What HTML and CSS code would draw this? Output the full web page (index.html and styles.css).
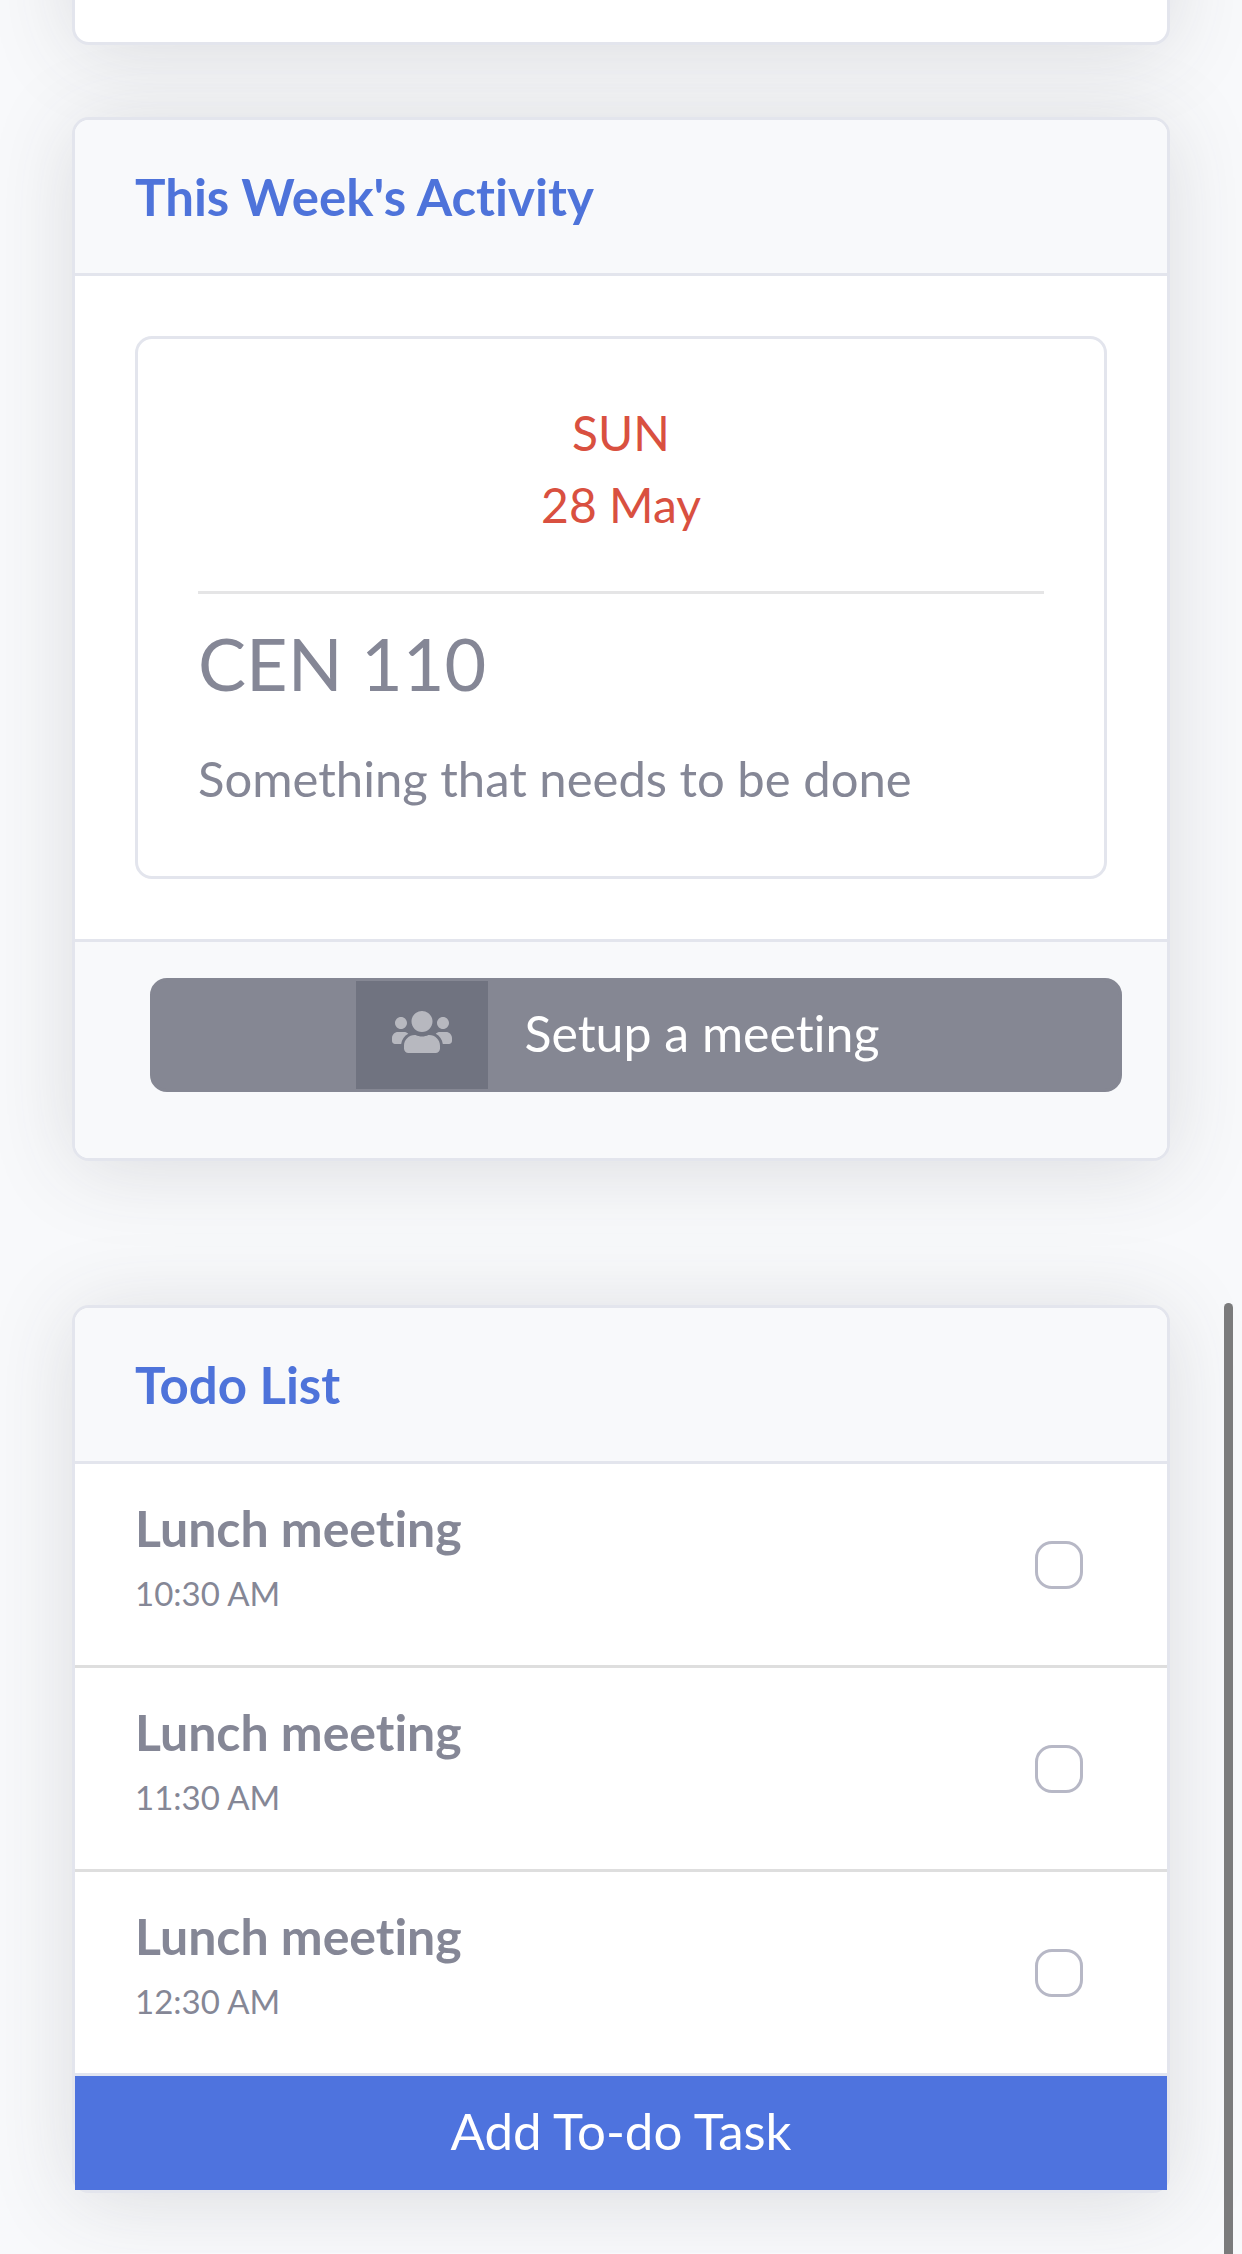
FILE: index.html
```html
<!DOCTYPE html>
<html lang="en">
<head>
<meta charset="utf-8">
<meta name="viewport" content="width=device-width, initial-scale=1">
<title>Dashboard</title>
<link rel="stylesheet" href="styles.css">
</head>
<body>
<main class="page">
  <section class="card card-previous"></section>

  <section class="card">
    <header class="card-header"><h2 class="card-heading">This Week's Activity</h2></header>
    <div class="card-body">
      <article class="event">
        <p class="event-date">SUN<br>28 May</p>
        <hr class="event-rule">
        <h3 class="event-title">CEN 110</h3>
        <p class="event-text">Something that needs to be done</p>
      </article>
    </div>
    <footer class="card-footer">
      <button class="btn btn-meeting" type="button">
        <span class="btn-icon">
          <svg class="icon" viewBox="0 0 640 512" aria-hidden="true"><path fill="currentColor" d="M96 224c35.300 0 64-28.700 64-64s-28.700-64-64-64-64 28.700-64 64 28.700 64 64 64zm448 0c35.300 0 64-28.700 64-64s-28.700-64-64-64-64 28.700-64 64 28.700 64 64 64zm32 32h-64c-17.600 0-33.500 7.100-45.100 18.600 40.300 22.100 68.900 62 75.100 109.400h66c17.700 0 32-14.300 32-32v-32c0-35.300-28.700-64-64-64zm-256 0c61.900 0 112-50.100 112-112S381.900 32 320 32 208 82.100 208 144s50.100 112 112 112zm76.800 32h-8.300c-20.800 10-43.900 16-68.500 16s-47.600-6-68.500-16h-8.300C179.600 288 128 339.600 128 403.200V432c0 26.500 21.500 48 48 48h288c26.500 0 48-21.500 48-48v-28.800c0-63.600-51.600-115.200-115.200-115.200zm-223.700-13.400C161.500 263.100 145.600 256 128 256H64c-35.300 0-64 28.700-64 64v32c0 17.700 14.300 32 32 32h65.900c6.300-47.400 34.900-87.300 75.200-109.400z"/></svg>
        </span>
        <span class="btn-text">Setup a meeting</span>
      </button>
    </footer>
  </section>

  <section class="card card-todo">
    <header class="card-header"><h2 class="card-heading">Todo List</h2></header>
    <ul class="todo-list">
      <li class="todo-item">
        <label class="todo-label" for="todo-1"><strong class="todo-title">Lunch meeting</strong><small class="todo-time">10:30 AM</small></label>
        <input class="todo-check" type="checkbox" id="todo-1">
      </li>
      <li class="todo-item">
        <label class="todo-label" for="todo-2"><strong class="todo-title">Lunch meeting</strong><small class="todo-time">11:30 AM</small></label>
        <input class="todo-check" type="checkbox" id="todo-2">
      </li>
      <li class="todo-item">
        <label class="todo-label" for="todo-3"><strong class="todo-title">Lunch meeting</strong><small class="todo-time">12:30 AM</small></label>
        <input class="todo-check" type="checkbox" id="todo-3">
      </li>
    </ul>
    <button class="btn btn-add" type="button">Add To-do Task</button>
  </section>
</main>
<div class="scroll-thumb"></div>
</body>
</html>
```
FILE: styles.css
```css
* {
  box-sizing: border-box;
}

body {
  margin: 0;
  overflow-x: hidden;
  background: #f8f9fb;
  color: #858796;
  font-family: Lato, "Open Sans", sans-serif;
  font-size: 49px;
  font-variant-ligatures: none;
  line-height: 72px;
}

h2, h3, p, ul {
  margin: 0;
  padding: 0;
}

.page {
  display: flex;
  flex-direction: column;
  gap: 72px;
  padding: 0 72px 60px;
}

.card {
  border: 3px solid #e3e5ed;
  border-radius: 17px;
  background: #fff;
  box-shadow: 0 7px 84px rgba(58, 59, 69, 0.15);
}

/* End of the card that is scrolled out above */
.card-previous {
  min-height: 345px;
  margin-top: -300px;
}

.card-todo {
  margin-top: 72px;
}

.card-header {
  padding: 48px 60px;
  border-bottom: 3px solid #e3e5ed;
  border-radius: 14px 14px 0 0;
  background: #f8f9fb;
}

.card-heading {
  color: #4e73da;
  font-size: 51px;
  font-weight: 700;
  line-height: 57px;
}

.card-body {
  padding: 60px;
}

.card-footer {
  padding: 36px 45px 66px 75px;
  border-top: 3px solid #e3e5ed;
  border-radius: 0 0 14px 14px;
  background: #f8f9fb;
}

.event {
  padding: 58px 60px 62px;
  border: 3px solid #e3e5ed;
  border-radius: 17px;
}

.event-date {
  color: #d95040;
  font-size: 48px;
  text-align: center;
}

.event-rule {
  margin: 50px 0 26px;
  border: 0;
  border-top: 3px solid #e5e5e6;
}

.event-title {
  margin-bottom: 36px;
  font-size: 72px;
  font-weight: 400;
  line-height: 86px;
}

.btn {
  display: flex;
  justify-content: center;
  width: 100%;
  padding: 0;
  border: 3px solid;
  color: #fff;
  font: inherit;
}

.btn-meeting {
  border-color: #858793;
  border-radius: 17px;
  background: #858793;
  font-size: 50px;
}

.btn-icon {
  padding: 27px 36px 33px;
  background: #707380;
  color: #b7b8bf;
}

.icon {
  display: block;
  width: 60px;
  height: 48px;
}

.btn-text {
  padding: 16px 36px 20px;
}

.todo-list {
  list-style: none;
}

.todo-item {
  display: flex;
  align-items: center;
  justify-content: space-between;
  padding: 36px 84px 36px 60px;
  border-bottom: 3px solid #dedede;
}

.todo-item:last-child {
  border-bottom-color: #e1e5f0;
}

.todo-title,
.todo-time {
  display: block;
}

.todo-title {
  font-size: 50px;
  line-height: 57px;
}

.todo-time {
  font-size: 33px;
}

.todo-check {
  appearance: none;
  width: 48px;
  height: 48px;
  margin: 0;
  border: 3px solid #b7b8c6;
  border-radius: 17px;
  background: #fff;
}

.todo-check:checked {
  border-color: #4e73de;
  background: #4e73de;
}

.btn-add {
  padding: 16px 36px 20px;
  border-color: #4e73de;
  background: #4e73de;
  font-size: 51px;
}

.scroll-thumb {
  position: fixed;
  top: 1303px;
  right: 9px;
  bottom: 0;
  width: 9px;
  border-radius: 5px 5px 0 0;
  background: #7b7b7c;
}
```
